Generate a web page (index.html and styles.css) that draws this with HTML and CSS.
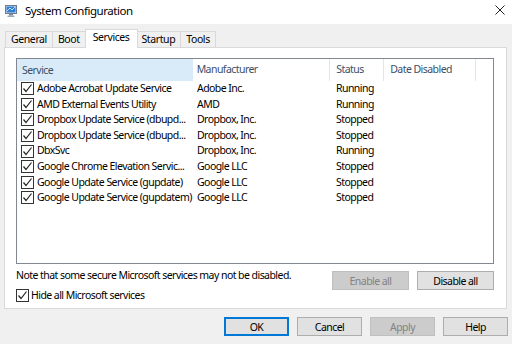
FILE: index.html
```html
<!DOCTYPE html>
<html>
<head>
<meta charset="utf-8">
<link rel="stylesheet" href="styles.css">
</head>
<body>
<div class="window">
  <div class="titlebar">
    <svg class="appicon" width="12" height="12" viewBox="0 0 12 12">
      <rect x="0.5" y="0.5" width="11" height="8" fill="#dfe7f0" stroke="#6b7c8f"/>
      <rect x="1.5" y="1.5" width="9" height="6" fill="#2f7fd6"/>
      <path d="M2 6 L5 3 L7 5 L10 2" stroke="#bfe0ff" stroke-width="1" fill="none"/>
      <rect x="4" y="9" width="4" height="1.5" fill="#7a8a9a"/>
      <rect x="2.5" y="10.5" width="7" height="1.5" fill="#9aa8b6"/>
    </svg>
    <span class="title">System Configuration</span>
    <svg class="close" width="10" height="10" viewBox="0 0 10 10">
      <path d="M0.5 0.5 L9.5 9.5 M9.5 0.5 L0.5 9.5" stroke="#222" stroke-width="1"/>
    </svg>
  </div>

  <div class="tabs">
    <div class="tab">General</div>
    <div class="tab">Boot</div>
    <div class="tab active">Services</div>
    <div class="tab">Startup</div>
    <div class="tab">Tools</div>
  </div>

  <div class="panel">
    <div class="listbox">
      <div class="row header">
        <div class="c1 sel">Service</div>
        <div class="c2 sep">Manufacturer</div>
        <div class="c3 sep">Status</div>
        <div class="c4 sep">Date Disabled</div>
        <div class="c5 sep"></div>
      </div>
      <div class="row"><div class="c1"><span class="cb"></span>Adobe Acrobat Update Service</div><div class="c2">Adobe Inc.</div><div class="c3">Running</div></div>
      <div class="row"><div class="c1"><span class="cb"></span>AMD External Events Utility</div><div class="c2">AMD</div><div class="c3">Running</div></div>
      <div class="row"><div class="c1"><span class="cb"></span>Dropbox Update Service (dbupd...</div><div class="c2">Dropbox, Inc.</div><div class="c3">Stopped</div></div>
      <div class="row"><div class="c1"><span class="cb"></span>Dropbox Update Service (dbupd...</div><div class="c2">Dropbox, Inc.</div><div class="c3">Stopped</div></div>
      <div class="row"><div class="c1"><span class="cb"></span>DbxSvc</div><div class="c2">Dropbox, Inc.</div><div class="c3">Running</div></div>
      <div class="row"><div class="c1"><span class="cb"></span>Google Chrome Elevation Servic...</div><div class="c2">Google LLC</div><div class="c3">Stopped</div></div>
      <div class="row"><div class="c1"><span class="cb"></span>Google Update Service (gupdate)</div><div class="c2">Google LLC</div><div class="c3">Stopped</div></div>
      <div class="row"><div class="c1"><span class="cb"></span>Google Update Service (gupdatem)</div><div class="c2">Google LLC</div><div class="c3">Stopped</div></div>
    </div>

    <div class="noterow">
      <div class="note">Note that some secure Microsoft services may not be disabled.</div>
      <div class="btn disabled enable">Enable all</div>
      <div class="btn disable">Disable all</div>
    </div>

    <div class="hiderow"><span class="cb"></span>Hide all Microsoft services</div>
  </div>

  <div class="footer">
    <div class="btn fbtn default">OK</div>
    <div class="btn fbtn">Cancel</div>
    <div class="btn fbtn disabled">Apply</div>
    <div class="btn fbtn">Help</div>
  </div>
</div>
</body>
</html>
```

FILE: styles.css
```css
* { box-sizing: border-box; }
html, body { margin: 0; padding: 0; }
body {
  width: 512px;
  height: 344px;
  overflow: hidden;
  background: #f0f0f0;
  font-family: "Noto Sans", "Open Sans", sans-serif;
  font-size: 10.5px;
  letter-spacing: -0.55px;
  color: #000;
}
.window { width: 512px; height: 344px; }

.titlebar {
  height: 24px;
  background: #fff;
  display: flex;
  align-items: center;
  padding-left: 5px;
}
.appicon { margin-right: 8px; margin-top: -2px; }
.title { font-size: 11.5px; letter-spacing: -0.45px; color: #000; margin-top: -3px; }
.close { margin-left: auto; margin-right: 7px; margin-top: -4px; }

.tabs {
  height: 23px;
  display: flex;
  align-items: flex-end;
  padding-left: 5px;
}
.tab {
  height: 16px;
  line-height: 14px;
  padding: 0 5px;
  border: 1px solid #d9d9d9;
  border-bottom: none;
  margin-left: -1px;
  background: #f0f0f0;
  position: relative;
  letter-spacing: -0.4px;
}
.tab:first-child { margin-left: 0; }
.tab.active {
  height: 19px;
  line-height: 15px;
  background: #fff;
  margin: 0 -1px -1px -1px;
  padding: 0 7px;
  z-index: 2;
}

.panel {
  margin: 0 5px 0 4px;
  height: 262px;
  background: #fff;
  border: 1px solid #d9d9d9;
  padding: 10px 12px 0 11px;
  display: flex;
  flex-direction: column;
}

.listbox {
  height: 206px;
  border: 1px solid #828790;
}
.row {
  display: flex;
  height: 15.6px;
  line-height: 15.6px;
  white-space: nowrap;
}
.row.header {
  height: 22px;
  line-height: 20px;
  color: #3c4f68;
}
.c1 { width: 176px; padding-left: 4px; display: flex; align-items: center; overflow: hidden; }
.row.header .c1 { padding-left: 5px; }
.c2 { width: 137px; padding-left: 4px; overflow: hidden; }
.c3 { width: 54px; padding-left: 6px; }
.c4 { width: 92px; padding-left: 6px; }
.c5 { width: 18px; }
.sel { background: #d9ebf9; }
.sep { border-left: 1px solid #e5e5e5; }
.row.header .c2 { border-left: none; }

.cb {
  width: 13px;
  height: 13px;
  border: 1px solid #333;
  background: #fff url("data:image/svg+xml;utf8,<svg xmlns='http://www.w3.org/2000/svg' width='11' height='11' viewBox='0 0 11 11'><path d='M1.5 5.5 L4 8.5 L9.5 1.5' stroke='%23222' stroke-width='1.2' fill='none'/></svg>") no-repeat center;
  margin-right: 3px;
  flex: none;
  display: inline-block;
}

.noterow {
  display: flex;
  align-items: flex-start;
  margin-top: 7px;
  height: 19px;
}
.note { flex: 1; line-height: 9px; white-space: nowrap; }
.btn {
  height: 19px;
  border: 1px solid #adadad;
  background: #e1e1e1;
  display: flex;
  align-items: center;
  justify-content: center;
}
.btn.disabled {
  background: #cccccc;
  border-color: #bfbfbf;
  color: #838383;
}
.enable { width: 77px; }
.disable { width: 77px; margin-left: 8px; }

.hiderow {
  display: flex;
  align-items: center;
  margin-top: -1px;
  height: 12px;
}
.hiderow .cb { margin-right: 2px; }

.footer {
  display: flex;
  justify-content: flex-end;
  padding: 8px 4px 0 0;
  gap: 8px;
}
.fbtn { width: 65px; }
.fbtn.default { border: 2px solid #0078d7; }
```
